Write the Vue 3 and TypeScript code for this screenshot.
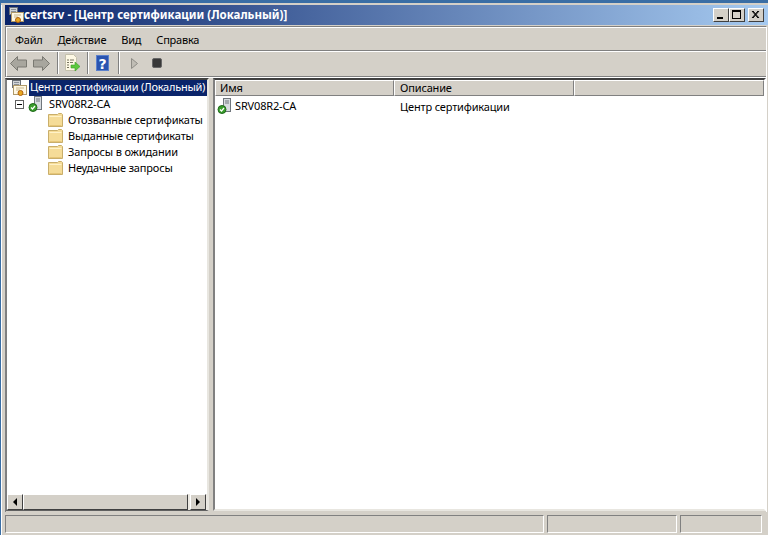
<script setup lang="ts">
const folders = ['Отозванные сертификаты', 'Выданные сертификаты', 'Запросы в ожидании', 'Неудачные запросы']
</script>

<template>
  <div class="desktop">
    <div class="window">
      <div class="titlebar">
        <svg class="ic16" viewBox="0 0 16 18" width="16" height="18">
          <rect x="1.500" y="1.500" width="8" height="7" fill="#d0d4d8" stroke="#6a7078"/>
          <path d="M3 3.500h5M3 5.500h5" stroke="#8a9098"/>
          <rect x="3.500" y="6.500" width="12" height="9" fill="#fff8e4" stroke="#b09a6a"/>
          <path d="M6 9h7M6 11h4" stroke="#c8b890"/>
          <circle cx="10" cy="14" r="2.500" fill="#e8a820" stroke="#b06010"/>
        </svg>
        <span class="title">certsrv - [Центр сертификации (Локальный)]</span>
        <div class="capbtns">
          <button class="cap"><svg width="16" height="14" viewBox="0 0 16 14"><rect x="4" y="9" width="6" height="2" fill="#000"/></svg></button>
          <button class="cap"><svg width="16" height="14" viewBox="0 0 16 14"><rect x="3.500" y="2.500" width="8" height="8" fill="none" stroke="#000"/><rect x="3" y="2" width="9" height="2" fill="#000"/></svg></button>
          <button class="cap close"><svg width="16" height="14" viewBox="0 0 16 14"><path d="M4 3l6 7M5 3l6 7M10 3l-6 7M11 3l-6 7" stroke="#000"/></svg></button>
        </div>
      </div>
      <div class="inner">
        <nav class="menubar">
          <span>Файл</span><span>Действие</span><span>Вид</span><span>Справка</span>
        </nav>
        <div class="toolbar">
          <svg class="back" width="17" height="15" viewBox="0 0 17 15"><path d="M.5 7.500 7.500 .5V4h9v7h-9v3.500z" fill="#a8a69e" stroke="#7a7972"/></svg>
          <svg class="fwd" width="17" height="15" viewBox="0 0 17 15"><path d="M16.500 7.500 9.500 .5V4h-9v7h9v3.500z" fill="#a8a69e" stroke="#7a7972"/></svg>
          <i class="sep s-a"></i>
          <svg class="doc" width="16" height="18" viewBox="0 0 16 18">
            <path d="M1.500 .5h8l3 3v13h-11z" fill="#fdf8e4" stroke="#c4c0ac"/>
            <path d="M3 6h2M6 6h4M3 8.500h2M6 8.500h3M3 11h2M3 13.500h2" stroke="#77735f"/>
            <path d="M7 11h4V8l5 4.500-5 4.500v-3H7z" fill="#5cc83c" stroke="#3e9e2a" stroke-width=".6"/>
          </svg>
          <i class="sep s-b"></i>
          <svg class="help" width="13" height="16" viewBox="0 0 13 16">
            <rect width="13" height="16" fill="#2a54b0"/>
            <rect x=".5" y=".5" width="12" height="15" fill="none" stroke="#5b80cc"/>
            <text x="6.500" y="13.500" text-anchor="middle" class="q">?</text>
          </svg>
          <i class="sep s-c"></i>
          <svg class="play" width="7" height="11" viewBox="0 0 7 11"><path d="M.5 .5l6 5-6 5z" fill="#c0bdb5" stroke="#8e8c86"/></svg>
          <span class="stop"></span>
        </div>
        <div class="panes">
          <aside class="tree">
            <div class="tree-body">
              <div class="row root">
                <svg class="ic16" viewBox="0 0 16 16" width="16" height="16">
                  <rect x="1.500" y=".5" width="8" height="7" fill="#d0d4d8" stroke="#6a7078"/>
                  <path d="M3 2.500h5M3 4.500h5" stroke="#8a9098"/>
                  <rect x="2.500" y="5.500" width="13" height="9" fill="#fff8e4" stroke="#b09a6a"/>
                  <path d="M5 8h8M5 10h4" stroke="#c8b890"/>
                  <circle cx="9.500" cy="13" r="2.500" fill="#e8a820" stroke="#b06010"/>
                </svg>
                <span class="sel">Центр сертификации (Локальный)</span>
              </div>
              <div class="row ca">
                <span class="expander"></span>
                <svg class="ic16" viewBox="0 0 16 16" width="16" height="16">
                  <rect x="6.500" y=".5" width="7" height="13" fill="#d8dce0" stroke="#70767c"/>
                  <path d="M8 3h4M8 5h4" stroke="#70767c"/>
                  <circle cx="5" cy="11.500" r="4" fill="#3a9e2c" stroke="#1f6a1a"/>
                  <path d="M3 11.500l1.500 1.500L7 10" stroke="#fff" stroke-width="1.200" fill="none"/>
                </svg>
                <span class="label">SRV08R2-CA</span>
              </div>
              <div v-for="f in folders" :key="f" class="row folder">
                <svg class="ic16" viewBox="0 0 16 16" width="16" height="16">
                  <path d="M.5 2.500h9l1-1h3l1 1v12H.5z" fill="#f5dc98" stroke="#c9ae6a"/>
                  <path d="M1.500 4.500h12" stroke="#fff2c8"/>
                  <path d="M1.500 13.500h12" stroke="#e6c678"/>
                </svg>
                <span class="label">{{ f }}</span>
              </div>
            </div>
            <div class="hscroll">
              <button class="sb"><span class="al"></span></button>
              <div class="thumb"></div>
              <button class="sb r"><span class="ar"></span></button>
            </div>
          </aside>
          <section class="list">
            <div class="head">
              <div class="hc c1">Имя</div>
              <div class="hc c2">Описание</div>
              <div class="hc c3"></div>
            </div>
            <div class="item">
              <div class="cell c1">
                <svg class="ic16" viewBox="0 0 16 16" width="16" height="16">
                  <rect x="6.500" y=".5" width="7" height="13" fill="#d8dce0" stroke="#70767c"/>
                  <path d="M8 3h4M8 5h4" stroke="#70767c"/>
                  <circle cx="5" cy="11.500" r="4" fill="#3a9e2c" stroke="#1f6a1a"/>
                  <path d="M3 11.500l1.500 1.500L7 10" stroke="#fff" stroke-width="1.200" fill="none"/>
                </svg>
                <span class="lbl">SRV08R2-CA</span>
              </div>
              <div class="cell c2"><span class="lbl">Центр сертификации</span></div>
            </div>
          </section>
        </div>
      </div>
      <footer class="status">
        <div class="sp s1"></div><div class="sp s2"></div><div class="sp s3"></div>
      </footer>
    </div>
  </div>
</template>

<style>
html, body { margin: 0; background: #d4d0c8; }
</style>

<style scoped>
.desktop {
  width: 768px; height: 535px; box-sizing: border-box; overflow: hidden;
  background: #3a6ea5; padding: 3px 0 0 1px;
  font: 11px "Noto Sans", sans-serif; color: #000; letter-spacing: -0.16px;
}
.window {
  height: 100%; box-sizing: border-box; background: #d4d0c8;
  border-top: 2px solid #d4d0c8; padding-left: 4px;
  box-shadow: inset 1px 0 0 #fff;
  display: flex; flex-direction: column;
}
.titlebar {
  height: 20px; flex: none; box-sizing: border-box; padding: 0 4px 0 3px;
  display: flex; align-items: center;
  background: linear-gradient(90deg, #0a246a 0, #a6caf0 100%);
  color: #fff;
}
.title { font: bold 11.500px "Noto Sans", sans-serif; letter-spacing: 0; white-space: nowrap; padding-bottom: 1px; }
.capbtns { margin-left: auto; display: flex; }
.cap {
  width: 16px; height: 14px; padding: 0; margin: 0; background: #d4d0c8; display: block;
  border: 1px solid; border-color: #fff #404040 #404040 #fff;
}
.cap svg { display: block; margin: -1px; }
.close { margin-left: 3px; }
.inner {
  flex: 1; min-height: 0; margin: 1px 1px 0 0; display: flex; flex-direction: column;
  border-left: 1px solid #808080; border-top: 1px solid #808080;
  border-right: 1px solid #fff;
}
.menubar {
  height: 24px; box-sizing: border-box; flex: none; display: flex; gap: 15px; align-items: center; padding-left: 8px; letter-spacing: -0.22px;
  border-top: 1px solid #fff; border-left: 1px solid #fff; border-bottom: 1px solid #808080;
}
.toolbar {
  height: 26px; box-sizing: border-box; flex: none; display: flex; align-items: center; padding: 0 0 2px 3px;
  border-top: 1px solid #fff; border-left: 1px solid #fff; border-bottom: 1px solid #808080;
}
.fwd { margin-left: 6px; }
.sep { width: 1px; height: 22px; background: #808080; border-right: 1px solid #fff; }
.s-a { margin-left: 7px; }
.doc { margin-left: 5px; }
.s-b { margin-left: 7px; }
.help { margin-left: 7px; }
.s-c { margin-left: 9px; }
.play { margin-left: 11px; }
.q { font: bold 14px "DejaVu Sans", sans-serif; fill: #fff; }
.stop { width: 8px; height: 8px; margin-left: 14px; background: #383838; border: 1px solid #666; border-radius: 2px; }
.panes { flex: 1; min-height: 0; display: flex; gap: 4px; border-top: 1px solid #fff; margin-left: -1px; padding-bottom: 1px; }
.tree {
  width: 204px; flex: none; box-sizing: border-box; display: flex; flex-direction: column; background: #fff;
  border: solid; border-width: 2px 2px 1px 2px; border-color: #404040 #e8e6e0 #606060 #808080;
}
.tree-body { flex: 1; min-height: 0; overflow: hidden; }
.row { display: flex; align-items: center; height: 16px; white-space: nowrap; }
.root { padding-left: 4px; }
.ic16 { flex: none; }
.sel { background: #0a246a; color: #fff; margin-left: 2px; padding: 0 0 0 1px; height: 16px; line-height: 14px; flex: 1; letter-spacing: -0.24px; }
.ca { padding-left: 8px; }
.expander {
  width: 7px; height: 7px; border: 1px solid #606060; margin-right: 4px;
  background: linear-gradient(#000, #000) center/5px 1px no-repeat; flex: none;
}
.label, .lbl { padding-bottom: 2px; }
.ca .label { margin-left: 5px; }
.folder { padding-left: 41px; }
.folder .label { margin-left: 4px; }
.hscroll { height: 16px; flex: none; display: flex; background: #ece9e2; padding-right: 1px; }
.sb, .thumb {
  box-sizing: border-box; height: 16px; background: #d4d0c8; padding: 0;
  border: 1px solid; border-color: #fff #404040 #404040 #fff;
}
.sb { width: 16px; display: flex; align-items: center; justify-content: center; }
.sb.r { margin-left: 2px; }
.thumb { flex: 1; }
.al { border: 4px solid transparent; border-right-color: #000; border-left-width: 0; }
.ar { border: 4px solid transparent; border-left-color: #000; border-right-width: 0; }
.list {
  flex: 1; min-width: 0; background: #fff; box-sizing: border-box;
  border: 2px solid; border-color: #404040 #fff #e8e6e0 #808080;
}
.head { display: flex; height: 16px; background: #d4d0c8; }
.hc {
  box-sizing: border-box; height: 16px; line-height: 13px; padding-left: 4px;
  border: 1px solid; border-color: #fff #808080 #808080 #fff;
}
.head .c1 { width: 179px; }
.head .c2 { width: 180px; }
.head .c2 { padding-left: 5px; }
.head .c3 { flex: 1; }
.item { display: flex; height: 16px; margin-top: 2px; align-items: center; white-space: nowrap; }
.cell.c1 { width: 179px; padding-left: 2px; box-sizing: border-box; display: flex; gap: 2px; align-items: center; }
.cell.c2 { padding-left: 6px; }
.status { height: 18px; flex: none; display: flex; gap: 3px; margin: 3px 0 2px; }
.sp { box-sizing: border-box; border: 1px solid; border-color: #808080 #fff #fff #808080; }
.s1 { width: 539px; }
.s2 { width: 130px; }
.s3 { width: 82px; }
</style>
